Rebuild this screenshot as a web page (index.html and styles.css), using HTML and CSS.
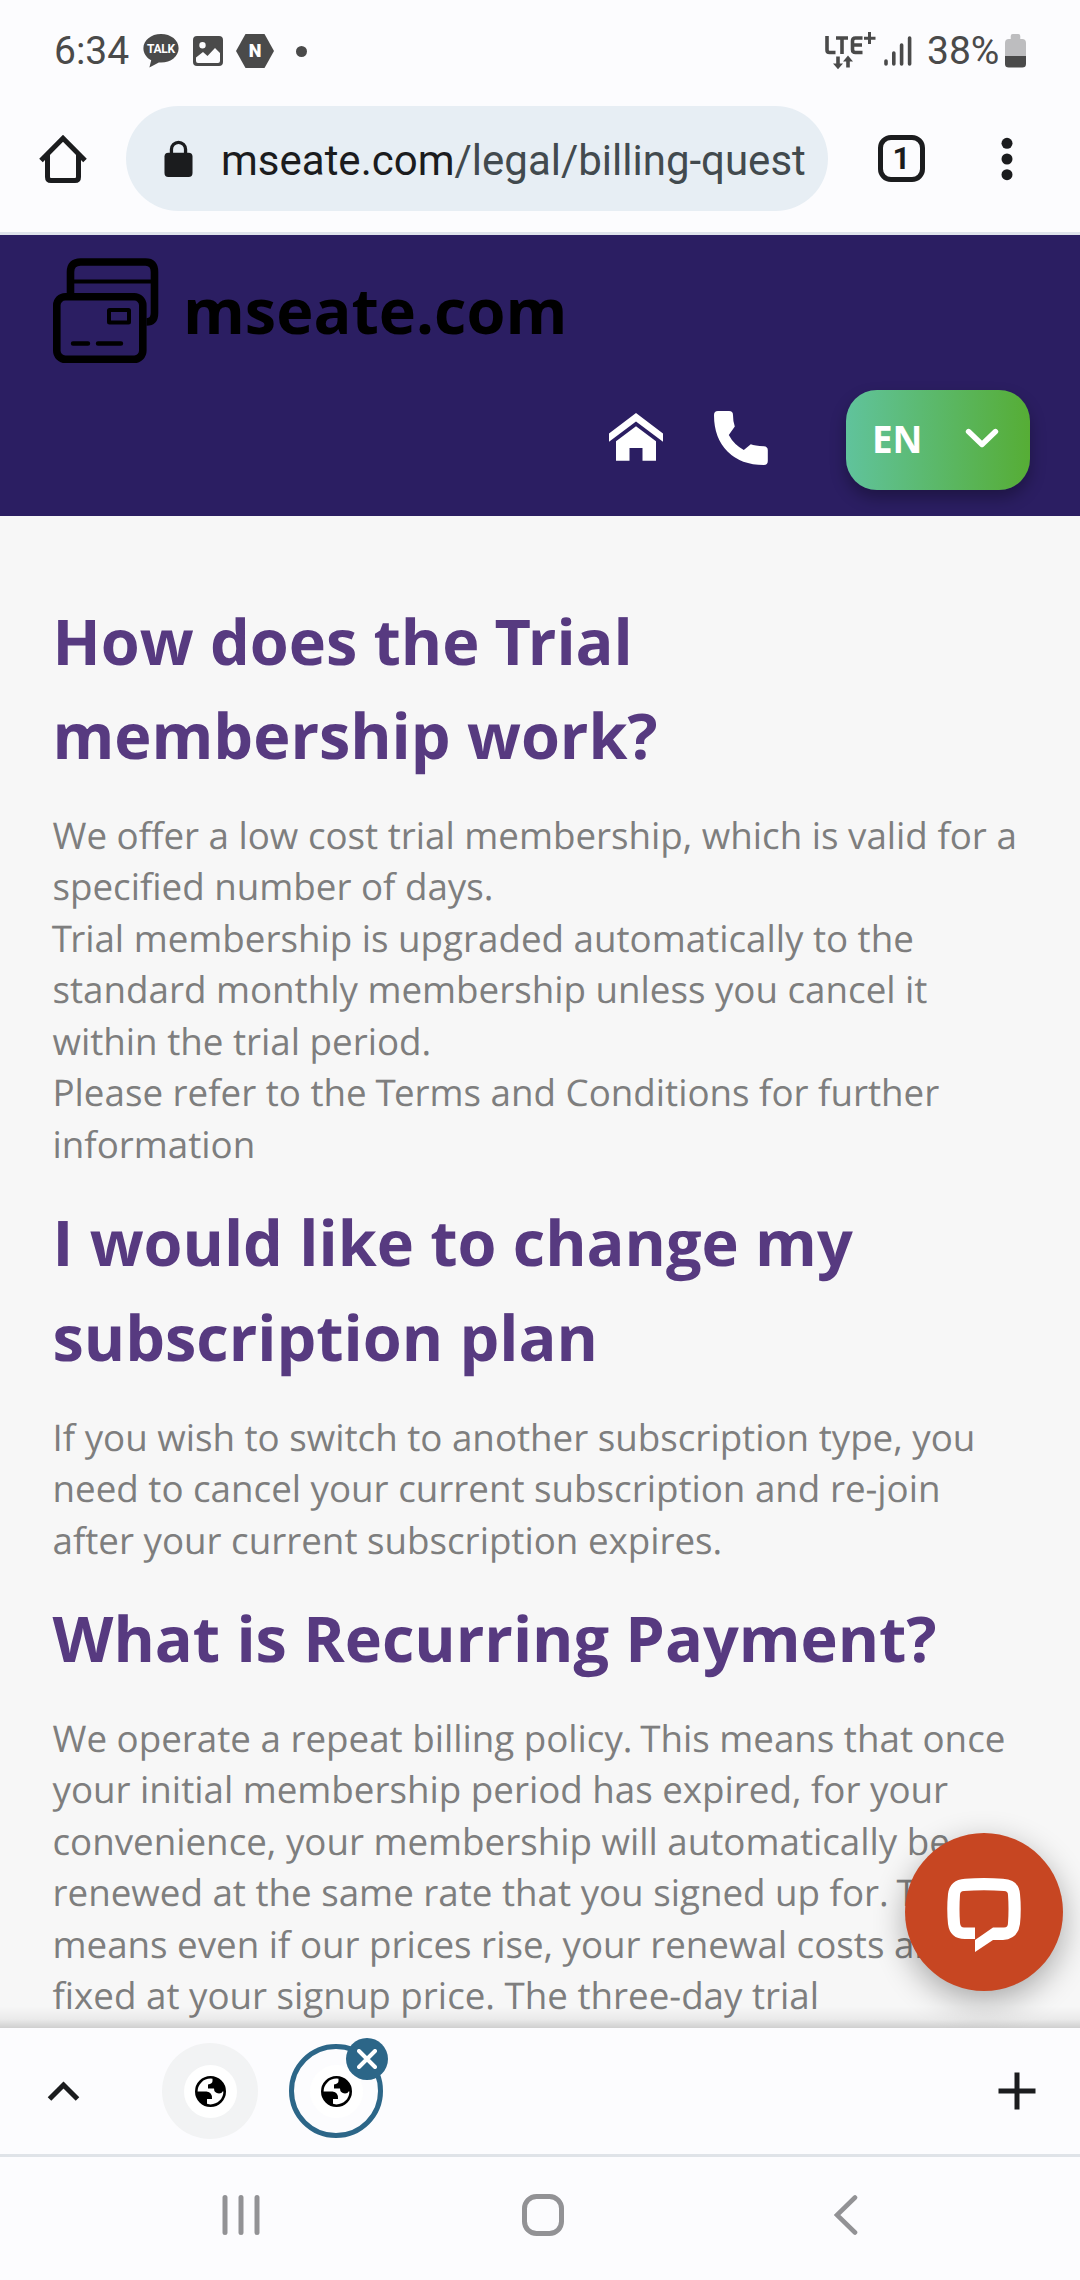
FILE: index.html
```html
<!DOCTYPE html>
<html lang="en">
<head>
    <meta charset="UTF-8">
    <meta name="viewport" content="width=device-width, initial-scale=1.0">
    <title>Billing questions - mseate.com</title>
    <link rel="stylesheet" href="styles.css">
</head>
<body>
    <div class="status-bar">
        <span class="time">6:34</span>
        <svg class="talk" width="36" height="34" viewBox="0 0 36 34">
            <path d="M18 0C8 0 .4 6.3.4 14.200c0 5.200 3.200 9.600 7.800 12.100L6.400 33.600l9.400-5.200c.7.1 1.400.1 2.200.1 10 0 17.600-6.300 17.600-14.300S28 0 18 0z" fill="#4a4a4a"/>
            <text x="18" y="19.300" text-anchor="middle">TALK</text>
        </svg>
        <svg class="photo" width="30" height="30" viewBox="0 0 30 30">
            <path fill="#4a4a4a" fill-rule="evenodd" d="M4 0h22a4 4 0 0 1 4 4v22a4 4 0 0 1-4 4H4a4 4 0 0 1-4-4V4a4 4 0 0 1 4-4zM9.500 6a3.200 3.200 0 1 0 0 6.400 3.200 3.200 0 0 0 0-6.400zM3 21.500v3.500q0 2 2 2h20q2 0 2-2v-8l-5-5-7.500 8-4.500-4z"/>
        </svg>
        <svg class="naver" width="38" height="34" viewBox="0 0 38 34">
            <path d="M9.500 0h19L38 17l-9.500 17h-19L0 17z" fill="#4a4a4a"/>
            <text x="19" y="23.200" text-anchor="middle">N</text>
        </svg>
        <span class="dot"></span>
        <svg class="lte" width="52" height="38" viewBox="0 0 52 38">
            <g fill="none" stroke="#4a4a4a" stroke-width="3.600">
                <path d="M2 4v14q0 2.500 2.500 2.500h6M11 6h12M17 6v16M37.500 6h-7q-3 0-3 3v8.500q0 3 3 3h7M27 13h10"/>
                <path d="M44.500 0v12M39 6.200h11.500" stroke-width="3"/>
            </g>
            <path d="M11.200 24.500h3.600v7h3.200L13 37.300l-5-5.800h3.200zM21.200 35.500v-6h-3.200l5-6 5 6h-3.200v6z" fill="#4a4a4a"/>
        </svg>
        <svg class="signal" width="28" height="30" viewBox="0 0 28 30">
            <path d="M2 25v3M9.800 17v11M17.600 9v19M25.600 2v26" stroke="#4a4a4a" stroke-width="3.600" stroke-linecap="round"/>
        </svg>
        <span class="percent">38%</span>
        <svg class="battery" width="21" height="34" viewBox="0 0 22 34" preserveAspectRatio="none">
            <path d="M6 5V2q0-2 2-2h6q2 0 2 2v3h2q4 0 4 4v13H0V9q0-4 4-4z" fill="#bdbdbf"/>
            <path d="M0 22h22v8q0 3.500-4 3.500H4q-4 0-4-3.500z" fill="#4a4a4a"/>
        </svg>
    </div>

    <div class="toolbar">
        <svg class="home" width="48" height="48" viewBox="0 0 48 48">
            <path d="M2 25.500L24 3.300l22 22.200M8.500 19v23q0 3.500 3.500 3.500h24q3.500 0 3.500-3.500V19" fill="none" stroke="#1b1c1e" stroke-width="5"/>
        </svg>
        <div class="address">
            <svg width="29" height="38" viewBox="0 0 30 38">
                <rect x="0.500" y="12.500" width="29" height="25" rx="4" fill="#1b1c1e"/>
                <path d="M7.700 14V9a7.300 7.300 0 0 1 14.600 0v5" fill="none" stroke="#1b1c1e" stroke-width="3.400"/>
            </svg>
            <span class="url">mseate.com<span class="path">/legal/billing-quest</span></span>
        </div>
        <div class="tabs-count">1</div>
        <svg class="menu" width="12" height="46" viewBox="0 0 12 46">
            <g fill="#1b1c1e"><circle cx="6" cy="7.300" r="5.500"/><circle cx="6" cy="23" r="5.500"/><circle cx="6" cy="38.700" r="5.500"/></g>
        </svg>
    </div>

    <header class="header">
        <div class="logo">
            <svg width="106" height="106" viewBox="0 0 106 106" fill="none" stroke="#000">
                <path d="M17.500 37V14q0-10 10-10h65q9 0 9 10v41q0 9-8 9" stroke-width="7.600"/>
                <path d="M20 23.500h80" stroke-width="4"/>
                <rect x="3.800" y="38.800" width="86" height="62.500" rx="8.500" stroke-width="7.600"/>
                <rect x="56" y="52" width="20" height="12.500" rx=".5" stroke-width="4"/>
                <path d="M20 85.500h15M45 85.500h23" stroke-width="4.400" stroke-linecap="round"/>
            </svg>
            <span>mseate.com</span>
        </div>
        <nav class="nav">
            <svg class="nav-home" width="54" height="48" viewBox="0 0 54 48" fill="#fff">
                <path d="M27 0l27 20.500v8.300L27 8.500 0 28.800v-8.300z"/>
                <path d="M27 13.300l20 15V47.700H33.500V35H20.500V47.700H7V28.300z"/>
            </svg>
            <!-- phone handset -->
            <svg class="nav-phone" width="54" height="54" viewBox="0 0 54 54" fill="#fff">
                <path d="M4 0h11q4 0 4 4 0 7 1.800 11.500l-6 8.500q5 9.500 15 15l7-5.800q4 1.500 13 2 4 .3 4 4V50q0 4-4 4Q27 54 13.500 40.500 0 27 0 4 0 0 4 0z"/>
            </svg>
            <div class="lang">
                <span>EN</span>
                <svg width="34" height="20" viewBox="0 0 34 20">
                    <path d="M3.500 3.500L17 16.500l13.500-13" fill="none" stroke="#fff" stroke-width="5.400" stroke-linecap="round" stroke-linejoin="round"/>
                </svg>
            </div>
        </nav>
    </header>

    <main class="content">
        <h2>How does the <span class="kern">T</span>rial<br>membership work?</h2>
        <p>We offer a low cost trial membership, which is valid for a<br>specified number of days.<br><span class="kern">T</span>rial membership is upgraded automatically to the<br>standard monthly membership unless you cancel it<br>within the trial period.<br>Please refer to the <span class="kern">T</span>erms and Conditions for further<br>information</p>
        <h2>I would like to change my<br>subscription plan</h2>
        <p>If you wish to switch to another subscription type, you<br>need to cancel your current subscription and re-join<br>after your current subscription expires.</p>
        <h2>What is Recurring Payment?</h2>
        <p>We operate a repeat billing policy. <span class="kern-before">This</span> means that once<br>your initial membership period has expired, for your<br>convenience, your membership will automatically be<br>renewed at the same rate that you signed up for. <span class="kern-before">This</span><br>means even if our prices rise, your renewal costs are<br>fixed at your signup price. The three-day trial</p>
        <div class="chat">
            <svg width="74" height="74" viewBox="0 0 74 74">
                <path fill="#fff" fill-rule="evenodd" d="M18 .8Q37-.8 56 .8 72 1.500 73 16 74.500 31 73 46 71 61 56 62H46L28 74V61H18Q3 61 1 46-.5 31 1 16 3 1.500 18 .8zM17 13Q13 13 13 17 12 31 13 45 13.500 49.500 17 49.500H28V62L46 49.500H57Q61 49.500 61 45 62 31 61 17 61 13 57 13 37 11.500 17 13z"/>
            </svg>
        </div>
    </main>

    <div class="tab-strip">
        <svg class="up" width="33" height="22" viewBox="0 0 33 22">
            <path d="M2.500 19l14-14 14 14" fill="none" stroke="#1b1c1e" stroke-width="5"/>
        </svg>
        <div class="tab">
            <div class="favicon">
                <svg width="31" height="31" viewBox="0 0 31 31">
                    <circle cx="15.500" cy="15.500" r="14.200" fill="#fff" stroke="#000" stroke-width="2.600"/>
                    <path d="M17.500 1.500v3.500q0 2.500-4.500 3.500v4h6q0 4.500 5 5 3 0 3.500-2h2.500Q30 4 17.500 1.500zM1 15.500h10.500q6 .5 5.500 7.500h-5v6Q2 26 1 15.500z"/>
                </svg>
            </div>
        </div>
        <div class="tab active">
            <div class="favicon">
                <svg width="31" height="31" viewBox="0 0 31 31">
                    <circle cx="15.500" cy="15.500" r="14.200" fill="#fff" stroke="#000" stroke-width="2.600"/>
                    <path d="M17.500 1.500v3.500q0 2.500-4.500 3.500v4h6q0 4.500 5 5 3 0 3.500-2h2.500Q30 4 17.500 1.500zM1 15.500h10.500q6 .5 5.500 7.500h-5v6Q2 26 1 15.500z"/>
                </svg>
            </div>
            <div class="close">
                <svg width="20" height="20" viewBox="0 0 20 20">
                    <path d="M2 2l16 16M18 2L2 18" stroke="#fff" stroke-width="4" stroke-linecap="round"/>
                </svg>
            </div>
        </div>
        <svg class="plus" width="38" height="38" viewBox="0 0 38 38">
            <path d="M19 .5v37M.5 19h37" stroke="#1b1c1e" stroke-width="5"/>
        </svg>
    </div>

    <div class="system-nav">
        <svg width="38" height="42" viewBox="0 0 38 42">
            <path d="M3 3.500v35M19 3.500v35M35 3.500v35" stroke="#929295" stroke-width="5" stroke-linecap="round"/>
        </svg>
        <svg class="nav-square" width="42" height="42" viewBox="0 0 42 42">
            <rect x="2.500" y="2.500" width="37" height="37" rx="12" fill="none" stroke="#929295" stroke-width="5"/>
        </svg>
        <svg class="nav-back" width="24" height="42" viewBox="0 0 24 42">
            <path d="M21 3.500L3 21l18 17.500" fill="none" stroke="#929295" stroke-width="4.600" stroke-linecap="round"/>
        </svg>
    </div>
</body>
</html>
```

FILE: styles.css
```css
* {
    box-sizing: border-box;
}

body {
    margin: 0;
    width: 1080px;
    height: 2280px;
    display: flex;
    flex-direction: column;
    overflow: hidden;
    background-color: #fcfcfe;
    font-family: "Open Sans", "Noto Sans", sans-serif;
}

svg {
    display: block;
    flex-shrink: 0;
}

/* phone status bar */
.status-bar {
    display: flex;
    align-items: center;
    height: 102px;
    padding: 0 54px;
    font-family: Roboto, sans-serif;
    font-size: 39px;
    color: #4a4a4a;
}

.time {
    width: 89px;
}

.talk text {
    font-size: 12px;
    font-weight: bold;
    letter-spacing: -0.3px;
    fill: #fff;
}

.photo {
    margin-left: 14px;
}

.naver {
    margin-left: 13px;
}

.naver text {
    font-size: 18px;
    font-weight: 900;
    fill: #fff;
}

.dot {
    width: 11px;
    height: 11px;
    margin-left: 22px;
    border-radius: 50%;
    background-color: #4a4a4a;
}

.lte {
    margin-left: auto;
}

.signal {
    margin-left: 7px;
}

.percent {
    margin-left: 15px;
    width: 78px;
}

/* browser toolbar */
.toolbar {
    display: flex;
    align-items: center;
    height: 133px;
    padding: 0 67px 17px 40px;
    border-bottom: 3px solid #dfe3ec;
    font-family: Roboto, sans-serif;
}

.home {
    margin-left: -1px;
}

.address {
    display: flex;
    align-items: center;
    width: 702px;
    height: 105px;
    margin-left: 39px;
    padding-left: 38px;
    border-radius: 53px;
    background-color: #e7eef4;
}

.url {
    margin-left: 28px;
    padding-top: 4px;
    font-size: 42px;
    color: #1b1c1e;
    white-space: nowrap;
}

.path {
    color: #424a4e;
}

.tabs-count {
    width: 47px;
    height: 47px;
    margin-left: 50px;
    border: 5px solid #1b1c1e;
    border-radius: 13px;
    text-align: center;
    font-size: 31px;
    font-weight: bold;
    line-height: 37px;
    color: #1b1c1e;
}

.menu {
    margin-left: auto;
}

/* site header */
.header {
    height: 281px;
    padding: 23px 50px 0 53px;
    background-color: #2b1e62;
}

.logo {
    display: flex;
    align-items: center;
    height: 106px;
    font-size: 63px;
    font-weight: bold;
    color: #000;
}

.logo span {
    margin: -4px 0 0 24px;
}

.nav {
    display: flex;
    align-items: center;
    justify-content: flex-end;
    margin-top: 26px;
}

.nav-home {
    margin-top: -6px;
}

.nav-phone {
    margin: -4px 78px 0 51px;
}

.lang {
    display: flex;
    align-items: center;
    justify-content: space-between;
    width: 184px;
    height: 100px;
    padding: 0 31px 0 26px;
    border-radius: 31px;
    background-image: linear-gradient(to right, #60c39c, #56ad35);
    box-shadow: 0 8px 16px rgba(0, 0, 0, 0.3);
    font-size: 36.75px;
    font-weight: bold;
    color: #fff;
}

.lang span {
    margin-top: -3px;
}

.lang svg {
    margin-top: -4px;
}

/* page text */
.content {
    position: relative;
    flex: 1;
    min-height: 0;
    padding: 78.500px 52.500px 0;
    overflow: hidden;
    background-color: #f7f7f7;
    text-rendering: geometricPrecision;
}

.content h2 {
    margin: 0 0 26.500px;
    font-size: 63px;
    line-height: 94.500px;
    font-weight: bold;
    color: #573a80;
    letter-spacing: -0.03px;
    white-space: nowrap;
}

.content p {
    margin: 0 0 26px;
    font-size: 36.750px;
    line-height: 51.450px;
    color: #7e7e7e;
    letter-spacing: -0.01px;
    white-space: nowrap;
}

/* pull the next letter under the bar of the T */
.content .kern {
    margin-left: -0.02em;
    letter-spacing: -0.05em;
}

.kern-before {
    margin-left: -0.05em;
}

.content::after {
    content: "";
    position: absolute;
    left: 0;
    right: 0;
    bottom: 0;
    height: 22px;
    background-image: linear-gradient(to bottom, rgba(0, 0, 0, 0), rgba(0, 0, 0, 0.05) 60%, rgba(0, 0, 0, 0.16));
}

.chat {
    position: absolute;
    right: 17px;
    bottom: 37px;
    width: 158px;
    height: 158px;
    padding: 45px 0 0 42px;
    border-radius: 50%;
    background-color: #c74622;
    box-shadow: 0 10px 32px rgba(0, 0, 0, 0.32);
}

/* open tabs */
.tab-strip {
    display: flex;
    align-items: center;
    height: 129px;
    padding: 0 44px 0 47px;
    border-bottom: 3px solid #dfe3e8;
}

.tab {
    position: relative;
    display: flex;
    align-items: center;
    justify-content: center;
    width: 96px;
    height: 96px;
    margin-left: 82px;
    border-radius: 50%;
    background-color: #f2f3f4;
}

.tab.active {
    width: 94px;
    height: 94px;
    margin-left: 31px;
    border: 5px solid #2c6688;
    background-color: #fcfcfe;
}

.favicon {
    display: flex;
    align-items: center;
    justify-content: center;
    width: 53px;
    height: 53px;
    border-radius: 50%;
    background-color: #fff;
}

.close {
    position: absolute;
    top: -11px;
    right: -10px;
    display: flex;
    align-items: center;
    justify-content: center;
    width: 42px;
    height: 42px;
    border-radius: 50%;
    background-color: #2c6688;
}

.plus {
    margin-left: auto;
}

/* system buttons */
.system-nav {
    display: flex;
    height: 123px;
    padding: 37px 0 0 222px;
}

.nav-square {
    margin-left: 262px;
}

.nav-back {
    margin-left: 270px;
}
```
